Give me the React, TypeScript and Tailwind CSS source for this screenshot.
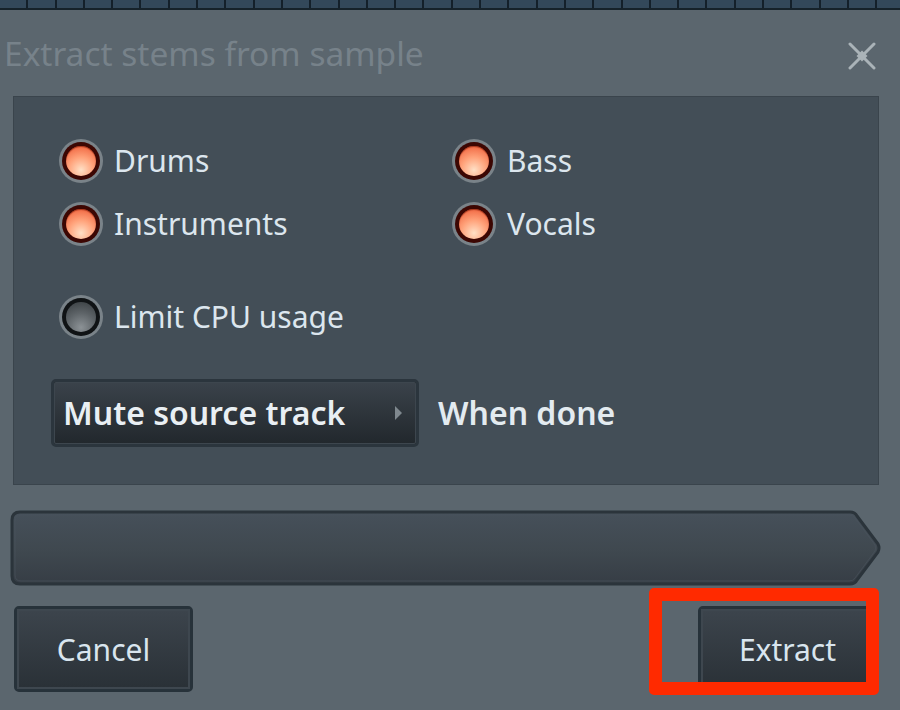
import React from "react";

const font = { fontFamily: '"Noto Sans", "Open Sans", sans-serif' };

function Radio({ on }: { on: boolean }) {
  return (
    <span className="flex h-[44px] w-[44px] shrink-0 items-center justify-center rounded-full bg-[#7a8389]">
      {on ? (
        <span className="flex h-[38px] w-[38px] items-center justify-center rounded-full bg-[#3c0703]">
          <span className="h-[30px] w-[30px] rounded-full bg-[radial-gradient(circle_at_50%_80%,#ffe0c6_0%,#ffa27a_45%,#ec5530_100%)] shadow-[inset_0_1px_1px_rgba(120,20,0,0.6)]" />
        </span>
      ) : (
        <span className="flex h-[38px] w-[38px] items-center justify-center rounded-full bg-[#101315]">
          <span className="h-[30px] w-[30px] rounded-full bg-[radial-gradient(circle_at_50%_85%,#8c9296_0%,#5d6367_50%,#363b3e_100%)]" />
        </span>
      )}
    </span>
  );
}

function Option({ label, on }: { label: string; on: boolean }) {
  return (
    <div className="flex h-[44px] items-center gap-[11px]">
      <Radio on={on} />
      <span className="text-[30px] leading-none text-[#dce6ee]">{label}</span>
    </div>
  );
}

function Button({ label }: { label: string }) {
  return (
    <button className="h-[86px] w-[179px] rounded-[5px] border-[3px] border-[#27323a] bg-[#2a3239] p-0">
      <span className="flex h-full w-full items-center justify-center border-[2px] border-[#3e474f] bg-[linear-gradient(#3c444c,#2a3137)] text-[30px] text-[#d9e5ee]">
        {label}
      </span>
    </button>
  );
}

export default function App() {
  const cells = Array.from({ length: 32 });

  return (
    <div className="relative h-[710px] w-[900px] overflow-hidden bg-[#5b666e]" style={font}>
      <div className="flex h-[10px] border-b-[2px] border-[#16222a] bg-[#33485a]">
        {cells.map((_, i) => (
          <div key={i} className="h-full w-[28.3px] shrink-0 border-r-[2px] border-[#14202a]" />
        ))}
      </div>

      <div className="flex h-[86px] items-center justify-between pl-[4px] pr-[24px]">
        <span className="mt-[2px] text-[33.5px] leading-none text-[#77828a]">Extract stems from sample</span>
        <svg width="28" height="28" viewBox="0 0 28 28" className="mt-[5px]">
          <g stroke="#aab3b8" strokeWidth="3" strokeLinecap="round">
            <line x1="2" y1="2" x2="26" y2="26" />
            <line x1="26" y1="2" x2="2" y2="26" />
          </g>
          <polygon points="14,8.5 19.5,14 14,19.5 8.5,14" fill="#aab3b8" />
        </svg>
      </div>

      <div className="ml-[13px] h-[389px] w-[866px] border border-[#3a444c] bg-[#434e57] pl-[45px] pt-[42px]">
        <div className="grid grid-cols-[393px_1fr] gap-y-[19px]">
          <Option label="Drums" on />
          <Option label="Bass" on />
          <Option label="Instruments" on />
          <Option label="Vocals" on />
        </div>
        <div className="mt-[49px]">
          <Option label="Limit CPU usage" on={false} />
        </div>
        <div className="-ml-[8px] mt-[40px] flex items-center gap-[19px]">
          <div className="h-[68px] w-[368px] rounded-[5px] border-[3px] border-[#2b353d] bg-[#252b30]">
            <div className="flex h-full w-full items-center justify-between rounded-[2px] border border-[#3d464e] bg-[linear-gradient(#3a424a,#22282d)] pl-[8px] pr-[12px]">
              <span className="text-[32px] font-semibold leading-none text-[#e9eff3]">Mute source track</span>
              <svg width="9" height="16" viewBox="0 0 9 16">
                <path d="M1 1 L8 8 L1 15 Z" fill="#7f888e" />
              </svg>
            </div>
          </div>
          <span className="text-[32px] font-semibold leading-none text-[#e3ebf0]">When done</span>
        </div>
      </div>

      <div className="ml-[10px] mt-[25px]">
        <svg width="874" height="76" viewBox="0 0 874 76">
          <defs>
            <linearGradient id="bar" x1="0" y1="0" x2="0" y2="1">
              <stop offset="0" stopColor="#46505a" />
              <stop offset="0.55" stopColor="#3f484f" />
              <stop offset="1" stopColor="#363d45" />
            </linearGradient>
          </defs>
          <path
            d="M10 2 H840 Q845 2 847 6 L868 34 Q870 38 868 42 L847 70 Q845 74 840 74 H10 Q2 74 2 66 V10 Q2 2 10 2 Z"
            fill="url(#bar)"
            stroke="#2b343b"
            strokeWidth="3"
            strokeLinejoin="round"
          />
          <path
            d="M11 5 H839 Q843 5 845 8 L865 35 Q866 38 865 41 L845 68 Q843 71 839 71 H11 Q5 71 5 65 V11 Q5 5 11 5 Z"
            fill="none"
            stroke="#4a545d"
            strokeWidth="1"
            strokeOpacity="0.6"
          />
        </svg>
      </div>

      <div className="mt-[20px] flex justify-between pl-[14px] pr-[23px]">
        <Button label="Cancel" />
        <Button label="Extract" />
      </div>

      <div className="absolute left-[649px] top-[588px] h-[107px] w-[230px] rounded-[5px] border-[13px] border-[#ff2a00]" />
    </div>
  );
}
